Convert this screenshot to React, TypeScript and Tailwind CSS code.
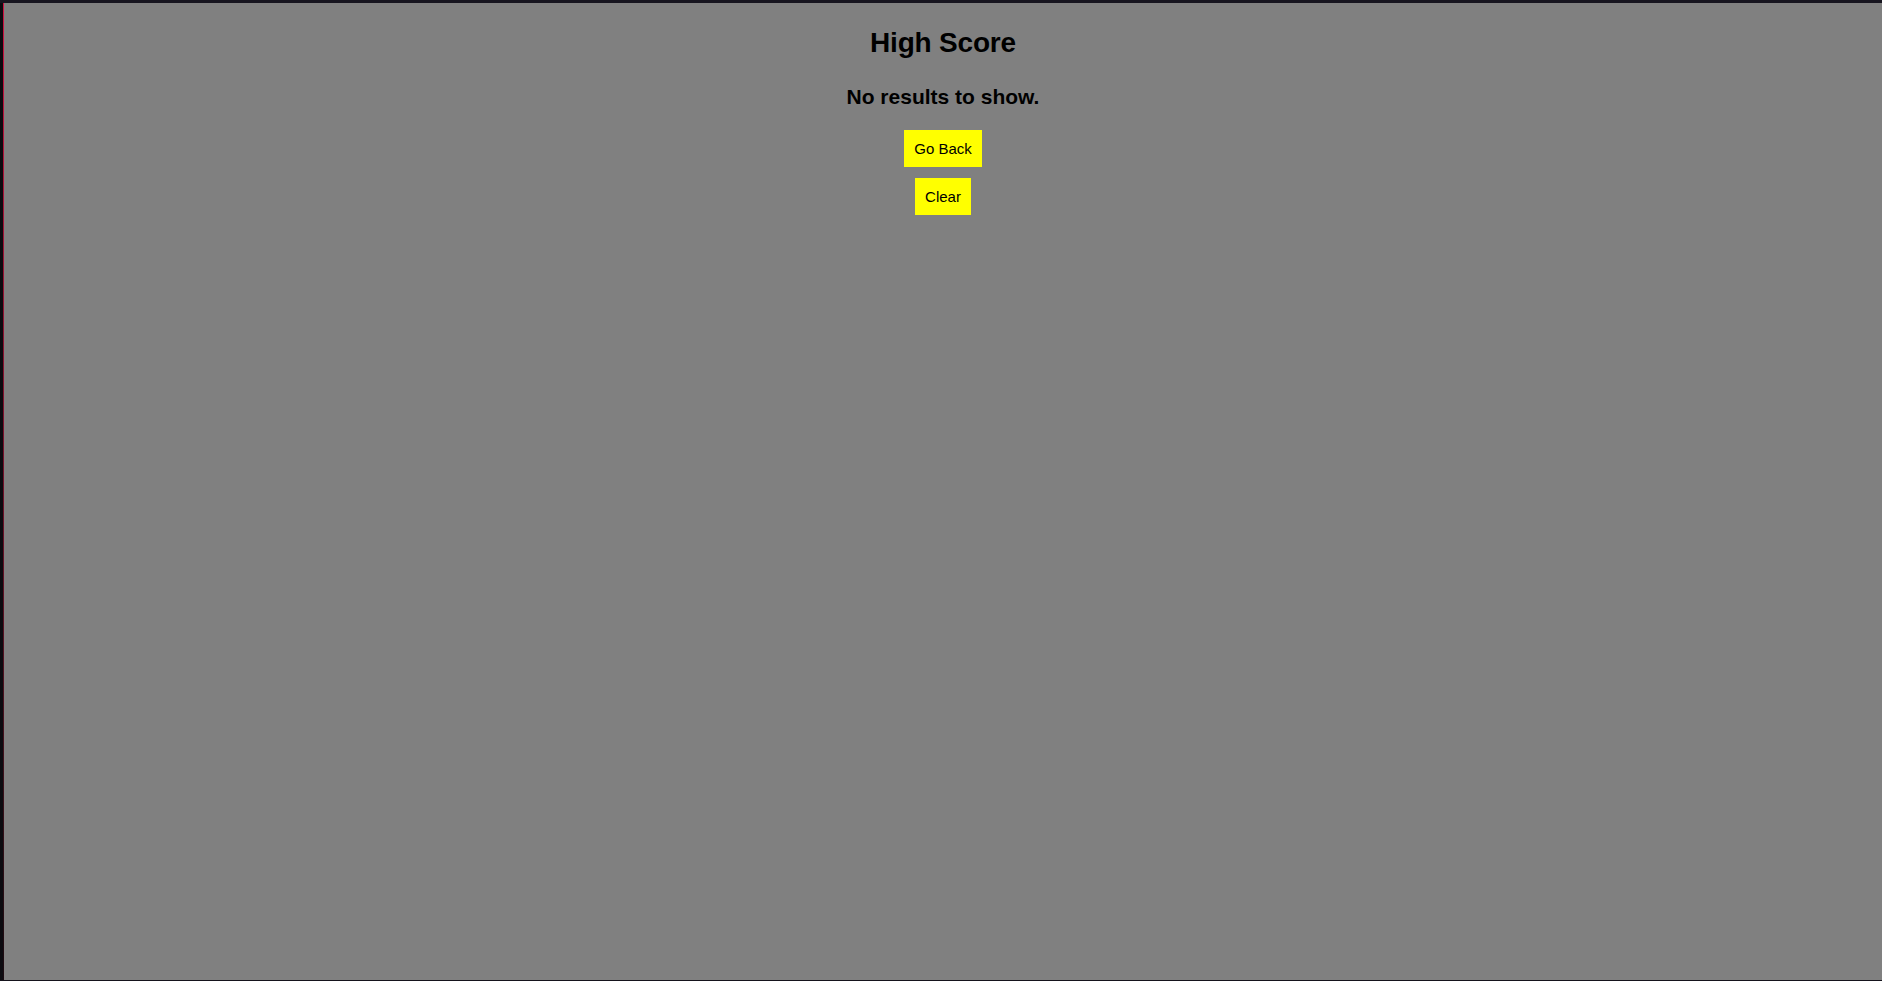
import React from "react";

export default function App() {
  return (
    <div
      className="flex h-[981px] w-full flex-col overflow-hidden bg-[#15131c]"
      style={{ fontFamily: '"Liberation Sans", Arial, sans-serif' }}
    >
      <div className="h-[3px] w-full bg-[#17151f]" />
      <div className="flex min-h-0 flex-1">
        <div className="w-[3px] bg-[#0c0b10]" />
        <div className="w-px bg-gradient-to-b from-[#d01040] via-[#701028] to-[#1a0a10]" />
        <main className="flex flex-1 flex-col items-center bg-[#808080] text-black">
          <h1 className="mt-[23px] text-[28px] font-bold leading-[34px] tracking-[-0.2px]">
            High Score
          </h1>
          <h2 className="mt-[24px] text-[21px] font-bold leading-[26px]">
            No results to show.
          </h2>
          <button className="mt-[20px] flex h-[37px] items-center bg-[#ffff00] px-[10px] text-[15px] leading-[17px] text-black">
            Go Back
          </button>
          <button className="mt-[11px] flex h-[37px] items-center bg-[#ffff00] px-[10px] text-[15px] leading-[17px] text-black">
            Clear
          </button>
        </main>
      </div>
      <div className="h-px w-full bg-[#15131c]" />
    </div>
  );
}
